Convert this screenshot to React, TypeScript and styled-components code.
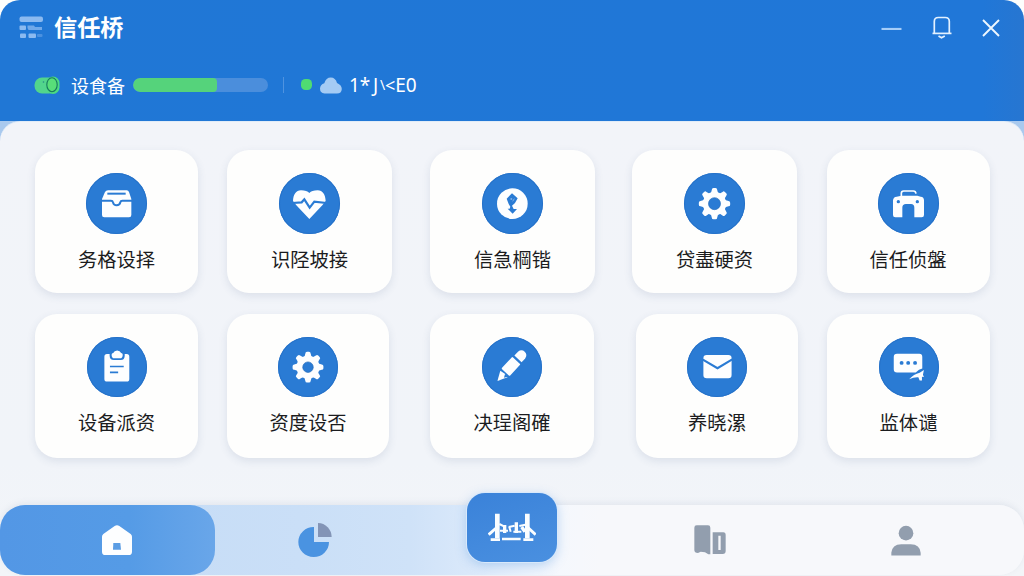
import React from 'react';
import styled, { createGlobalStyle } from 'styled-components';

const BLUE = '#2a7bd4';

const GlobalStyle = createGlobalStyle`
  * { box-sizing: border-box; }
  body {
    margin: 0;
    background: #fdfefc;
    font-family: "Noto Sans CJK SC", "Noto Sans", sans-serif;
  }
  svg { display: block; }
`;

const Window = styled.div`
  width: 1024px;
  height: 576px;
  display: flex;
  flex-direction: column;
  overflow: hidden;
`;

const Header = styled.header`
  height: 121px;
  flex: none;
  background: linear-gradient(90deg, #2077d5 0%, #2077d8 96%, #2776d1 100%);
  border-radius: 20px 20px 0 0;
  color: #fff;
`;

const TitleBar = styled.div`
  height: 55px;
  display: flex;
  align-items: center;
  padding: 0 24px 0 19px;
`;

const Title = styled.h1`
  margin: -3px 0 0 10px;
  flex: 1;
  font-size: 23.2px;
  line-height: 30px;
  font-weight: 700;
`;

const Controls = styled.div`
  display: flex;
  align-items: center;
  gap: 30px;
`;

const StatusBar = styled.div`
  height: 60px;
  display: flex;
  align-items: center;
  padding-left: 34px;
`;

const StatusText = styled.span`
  width: 54px;
  margin: 0 8px 0 11px;
  font-size: 18px;
  line-height: 24px;
  white-space: nowrap;
`;

const Track = styled.div`
  width: 135px;
  height: 14px;
  border-radius: 7px;
  overflow: hidden;
  background: #4b8edc;
`;

const Fill = styled.div`
  height: 100%;
  border-radius: 7px 4px 4px 7px;
  background: #55d37b;
`;

const Divider = styled.div`
  width: 1px;
  height: 16px;
  margin: 0 17px 0 15px;
  background: #4f93e0;
`;

const Dot = styled.div`
  width: 11px;
  height: 11px;
  margin: -2px 8px 0 0;
  border-radius: 4.5px;
  background: #4fdc72;
`;

const Code = styled.div`
  display: flex;
  align-items: center;
  margin-left: 7px;
  font-family: "Noto Sans", "Noto Sans CJK SC", sans-serif;
  font-size: 19px;
  line-height: 24px;
`;

const CodePart = styled.span<{ $w: number; $size?: number }>`
  width: ${p => p.$w}px;
  font-size: ${p => p.$size ?? 19}px;
  text-align: center;
  white-space: nowrap;
`;

const Body = styled.div`
  flex: 1;
  display: flex;
  flex-direction: column;
  background: linear-gradient(#a9c9ee 0 30px, #fdfefc 60px);
`;

const Panel = styled.main`
  flex: 1;
  display: flex;
  flex-direction: column;
  border-radius: 20px 20px 0 0;
  background: linear-gradient(180deg, #f2f4f9 0%, #f1f4f9 75%, #f3f5f8 100%);
  border-top: 1px solid #e1ecf8;
`;

const Cards = styled.div`
  flex: 1;
  display: flex;
  flex-direction: column;
  gap: 21px;
  padding: 28px 34px 0 35px;
`;

const CardRow = styled.div<{ $columns: string }>`
  display: grid;
  grid-template-columns: ${p => p.$columns};
  justify-content: start;
`;

const Card = styled.div<{ $h: number; $col: number }>`
  grid-column: ${p => p.$col};
  height: ${p => p.$h}px;
  padding-top: 23px;
  display: flex;
  flex-direction: column;
  align-items: center;
  border-radius: 22px;
  background: #fefefd;
  box-shadow: 0 3px 8px rgba(60, 85, 125, 0.12);
`;

const Badge = styled.div<{ $size: number }>`
  width: ${p => p.$size}px;
  height: ${p => p.$size}px;
  flex: none;
  border-radius: 50%;
  background: ${BLUE};
  box-shadow: inset 0 0 0 1px #2672c9;
  svg { width: 100%; height: 100%; }
`;

const Label = styled.div`
  margin-top: 11px;
  font-size: 19.3px;
  line-height: 28px;
  color: #1b1c1e;
  white-space: nowrap;
`;

const Nav = styled.nav`
  flex: none;
  height: 70px;
  margin-bottom: 1px;
  border-radius: 25px;
  display: grid;
  grid-template-columns: 215px 199px 196px 199px 215px;
  background: linear-gradient(90deg, #c2daf5 0, #cadff7 300px, #cfe2f8 410px, #d9e8fa 465px, #f5f8fd 560px, #f7f8fb 600px);
  box-shadow: 0 -2px 6px rgba(100, 120, 150, 0.11);
`;

const NavItem = styled.div<{ $active?: boolean; $shift?: number }>`
  display: flex;
  align-items: center;
  justify-content: center;
  padding-left: ${p => (p.$shift && p.$shift > 0 ? p.$shift : 0)}px;
  padding-right: ${p => (p.$shift && p.$shift < 0 ? -p.$shift : 0)}px;
  border-radius: 25px;
  background: ${p => (p.$active ? 'linear-gradient(90deg, #5397e5, #559be6 60%, #69a6e9)' : 'none')};
`;

const BridgeButton = styled.div`
  width: 90px;
  height: 69px;
  margin-top: -26px;
  border-radius: 18px;
  display: flex;
  align-items: center;
  justify-content: center;
  background: linear-gradient(160deg, #3a82d9, #4a90e0);
  box-shadow: 0 0 0 1px #d8e9fb, 0 3px 12px rgba(70, 140, 220, 0.35);
`;

const W = '#fdfeff';

const BoxIcon = () => (
  <svg viewBox="0 0 183 183">
    <path d="M66 52H122Q127 52 129 57L136 78V126Q136 133 129 133H55Q48 133 48 126V78L57 57Q60 52 66 52Z" fill={W} />
    <path d="M64 62H119" stroke={BLUE} strokeWidth="6" />
    <path d="M46 83H75Q80 83 81 88Q83 97 92 97Q101 97 103 88Q104 83 109 83H138" fill="none" stroke={BLUE} strokeWidth="6" />
  </svg>
);

const HeartIcon = () => (
  <svg viewBox="0 0 183 183">
    <path d="M91 138L52 97L42 84C43 65 51 52 66 52C78 52 86 55 91 60C96 55 104 52 116 52C131 52 139 65 140 84L130 97Z" fill={W} />
    <path d="M40 90L68 88L76 79L92 104L106 86L142 90" fill="none" stroke={BLUE} strokeWidth="6.5" />
  </svg>
);

const CoinIcon = () => (
  <svg viewBox="0 0 183 183">
    <circle cx="91" cy="92" r="46" fill={W} />
    <path d="M90 61L107 76L99 90L90 98L95 108H105L92 122L77 107H83L85 101L80 93L74 77Z" fill={BLUE} />
    <circle cx="88" cy="78" r="3" fill="#7db0e8" />
    <path d="M92 85L97 77" stroke="#7db0e8" strokeWidth="3" />
  </svg>
);

const GearIcon = ({ hole = 18 }: { hole?: number }) => (
  <svg viewBox="0 0 183 183">
    <g transform="translate(91.5 92)" fill={W}>
      {[0, 45, 90, 135, 180, 225, 270, 315].map(a => (
        <path key={a} transform={`rotate(${a})`} d="M-14 -28Q-9 -34 -8 -42Q-8 -47 -3 -47H3Q8 -47 8 -42Q9 -34 14 -28Z" />
      ))}
      <circle r="35" />
      <circle r={hole} fill={BLUE} stroke="#2169b9" strokeWidth="2" />
    </g>
  </svg>
);

const CaseIcon = () => (
  <svg viewBox="0 0 183 183">
    <path d="M70 70V61Q70 54 77 54H106Q113 54 114 62" fill="none" stroke={W} strokeWidth="5" />
    <path d="M56 71L70 68H118L128 71Q138 72 138 82V126Q138 133 131 133H109V104Q109 93 99 93H84Q73 93 73 104V133H52Q45 133 45 126V82Q46 72 56 71Z" fill={W} />
    <circle cx="61" cy="86" r="5" fill={BLUE} />
    <circle cx="118" cy="86" r="5" fill={BLUE} />
  </svg>
);

const ClipboardIcon = () => (
  <svg viewBox="0 0 183 183">
    <rect x="53" y="52" width="76" height="84" rx="8" fill={W} />
    <path d="M69 49H115V57Q115 70 103 70H82Q69 70 69 57Z" fill={BLUE} />
    <path d="M75 54Q75 50 80 49Q83 41 92 41Q101 41 104 49Q109 50 109 54Q109 65 100 65H84Q75 65 75 54Z" fill={W} />
    <path d="M70 90H112M70 108H95" stroke={BLUE} strokeWidth="5" />
  </svg>
);

const PencilIcon = () => (
  <svg viewBox="0 0 183 183">
    <g transform="translate(47 134) rotate(-47)" fill={W}>
      <path d="M0 0L29 -15Q34 0 29 15Z" />
      <path d="M21 8L32 2V15Z" fill={BLUE} />
      <rect x="36" y="-17" width="49" height="34" rx="3" />
      <path d="M92 -15H108Q122 -13 122 0Q122 13 108 15H92Z" />
    </g>
  </svg>
);

const MailIcon = () => (
  <svg viewBox="0 0 183 183">
    <rect x="50" y="55" width="86" height="71" rx="10" fill={W} />
    <path d="M47 68L93 95L138 68" fill="none" stroke={BLUE} strokeWidth="6.5" />
  </svg>
);

const ChatIcon = () => (
  <svg viewBox="0 0 183 183">
    <path d="M55 51H123Q132 51 132 61V96Q122 98 112 108H55Q45 108 45 98V61Q45 51 55 51Z" fill={W} />
    <circle cx="69" cy="79" r="6" fill={BLUE} />
    <circle cx="89" cy="79" r="6" fill={BLUE} />
    <circle cx="110" cy="79" r="6" fill={BLUE} />
    <path d="M92 129Q106 113 124 109L137 101L134 115L137 122L131 121V133H124L120 123Q106 122 92 129Z" fill={W} />
  </svg>
);

const MenuIcon = () => (
  <svg width="25" height="23" viewBox="0 0 25 23" fill="#8bbaf0">
    <rect x="0.5" y="0.5" width="23.5" height="5.5" rx="2" />
    <rect x="0.5" y="9.5" width="6.5" height="4.5" rx="1" />
    <path d="M8.5 9.5H15L16 11H23V14H9.5L8.5 12Z" opacity=".75" />
    <rect x="1" y="17.5" width="6" height="4.5" rx="1" />
    <rect x="9.5" y="17.5" width="7.5" height="4.5" rx="1" />
    <rect x="18" y="18" width="5.5" height="3" rx="1" opacity=".4" />
  </svg>
);

const MinimizeIcon = () => (
  <svg width="21" height="4" viewBox="0 0 21 4">
    <path d="M0.5 3H20.5" stroke="#a5cdf8" strokeWidth="2.2" />
  </svg>
);

const BellIcon = () => (
  <svg width="20" height="23" viewBox="0 0 20 23" fill="none" stroke="#e3f1ff" strokeWidth="1.7">
    <path d="M2.3 17V5.5Q2.3 1.5 6.3 1.5H13.3Q17.3 1.5 17.3 5.5V17" />
    <path d="M0.5 17.4H19.5" />
    <path d="M6.5 20L9.5 21.8L12.8 20" />
  </svg>
);

const CloseIcon = () => (
  <svg width="18" height="18" viewBox="0 0 18 18">
    <path d="M1 1L17 17M17 1L1 17" stroke="#eef7ff" strokeWidth="1.9" />
  </svg>
);

const ToggleIcon = () => (
  <svg width="26" height="19" viewBox="0 0 26 19">
    <rect x="0.5" y="1.5" width="22" height="16" rx="7.5" fill="#52d58c" />
    <rect x="12.5" y="0.5" width="13" height="17.5" rx="6.5" fill="#4ddb82" />
    <ellipse cx="18" cy="8.7" rx="5.2" ry="7" fill="#58de79" stroke="#16785f" strokeWidth="1.1" />
    <circle cx="9.5" cy="6" r="0.8" fill="#268b84" />
  </svg>
);

const CloudIcon = () => (
  <svg width="22" height="17" viewBox="0 0 22 17">
    <path d="M4.5 16.5Q0 16.2 0 11.5Q0.2 7.5 4.3 6.3Q6 0.5 10.8 0.5Q15.5 0.5 17 6Q21.8 8 21.8 12Q21.5 16.5 17 16.5Z" fill="#a4cbf4" />
  </svg>
);

const HomeIcon = () => (
  <svg width="30" height="30" viewBox="0 0 90 90">
    <path d="M38 3Q45 -2 52 3L86 27Q90 30 90 35V80Q90 90 80 90H10Q0 90 0 80V35Q0 30 4 27Z" fill="#fdfeff" />
    <path d="M34 54H55L57 74H33Z" fill="#5b9de4" />
  </svg>
);

const PieIcon = () => (
  <svg width="34" height="34" viewBox="0 0 102 102">
    <path d="M48 12V57H93A46 45 0 1 1 48 12Z" fill="#4a93e1" />
    <path d="M60 0A42 42 0 0 1 101 42H60Z" fill="#8394b6" />
  </svg>
);

const BridgeIcon = () => (
  <svg width="48" height="28" viewBox="0 0 144 84" fill="none" stroke="#fafdff">
    <path d="M28 2V76M118 2V76" strokeWidth="14" />
    <path d="M2 65L28 42M118 42L143 65" strokeWidth="9" />
    <path d="M34 33L48 40M62 42L80 38M94 39L112 35M36 53H60M76 56H100" strokeWidth="6" />
    <path d="M50 36V60M85 28V60M101 42L111 56" strokeWidth="10" />
    <path d="M64 42L68 56" strokeWidth="6" />
    <path d="M8 80H36M42 78H98M106 80H136" strokeWidth="8" />
  </svg>
);

const BooksIcon = () => (
  <svg width="32" height="30" viewBox="0 0 96 90" fill="#929eae">
    <path d="M8 1H42Q49 1 49 8V88H43L33 82L20 80L12 84Q1 84 1 75V8Q1 1 8 1Z" />
    <path fillRule="evenodd" d="M56 22H88Q95 22 95 30V78Q95 87 86 87H56ZM73 32V75H80V32Z" />
  </svg>
);

const PersonIcon = () => (
  <svg width="30" height="31" viewBox="0 0 90 92" fill="#929eae">
    <circle cx="45" cy="24" r="22" />
    <path d="M1 91V83Q3 57 31 57H59Q87 57 89 83V91Z" />
  </svg>
);

const rows = [
  {
    columns: '163px 29px 165px 38px 165px 37px 165px 29.5px 163px',
    height: 143,
    badge: 61,
    cards: [
      { text: '务格设择', icon: <BoxIcon /> },
      { text: '识陉坡接', icon: <HeartIcon /> },
      { text: '信急棡锴', icon: <CoinIcon /> },
      { text: '贷盡硬资', icon: <GearIcon /> },
      { text: '信任侦盤', icon: <CaseIcon /> },
    ],
  },
  {
    columns: '163px 29px 162px 41px 164px 42px 162px 29px 163px',
    height: 144,
    badge: 60,
    cards: [
      { text: '设备派资', icon: <ClipboardIcon /> },
      { text: '资度设否', icon: <GearIcon hole={16} /> },
      { text: '决珵阁確', icon: <PencilIcon /> },
      { text: '养晓漯', icon: <MailIcon /> },
      { text: '监体谴', icon: <ChatIcon /> },
    ],
  },
];

export default function App() {
  return (
    <Window>
      <GlobalStyle />
      <Header>
        <TitleBar>
          <MenuIcon />
          <Title>信任桥</Title>
          <Controls>
            <MinimizeIcon />
            <BellIcon />
            <CloseIcon />
          </Controls>
        </TitleBar>
        <StatusBar>
          <ToggleIcon />
          <StatusText>设食备</StatusText>
          <Track><Fill style={{ width: '62%' }} /></Track>
          <Divider />
          <Dot />
          <CloudIcon />
          <Code>
            <CodePart $w={10}>1</CodePart>
            <CodePart $w={12}>*</CodePart>
            <CodePart $w={9}>J</CodePart>
            <CodePart $w={5} $size={14}>\</CodePart>
            <CodePart $w={10} $size={18}>&lt;</CodePart>
            <CodePart $w={22}>E0</CodePart>
          </Code>
        </StatusBar>
      </Header>
      <Body>
        <Panel>
          <Cards>
            {rows.map((row, r) => (
              <CardRow key={r} $columns={row.columns}>
                {row.cards.map((card, i) => (
                  <Card key={card.text} $h={row.height} $col={i * 2 + 1}>
                    <Badge $size={row.badge}>{card.icon}</Badge>
                    <Label>{card.text}</Label>
                  </Card>
                ))}
              </CardRow>
            ))}
          </Cards>
          <Nav>
            <NavItem $active $shift={19}><HomeIcon /></NavItem>
            <NavItem><PieIcon /></NavItem>
            <NavItem><BridgeButton><BridgeIcon /></BridgeButton></NavItem>
            <NavItem><BooksIcon /></NavItem>
            <NavItem $shift={-21}><PersonIcon /></NavItem>
          </Nav>
        </Panel>
      </Body>
    </Window>
  );
}
